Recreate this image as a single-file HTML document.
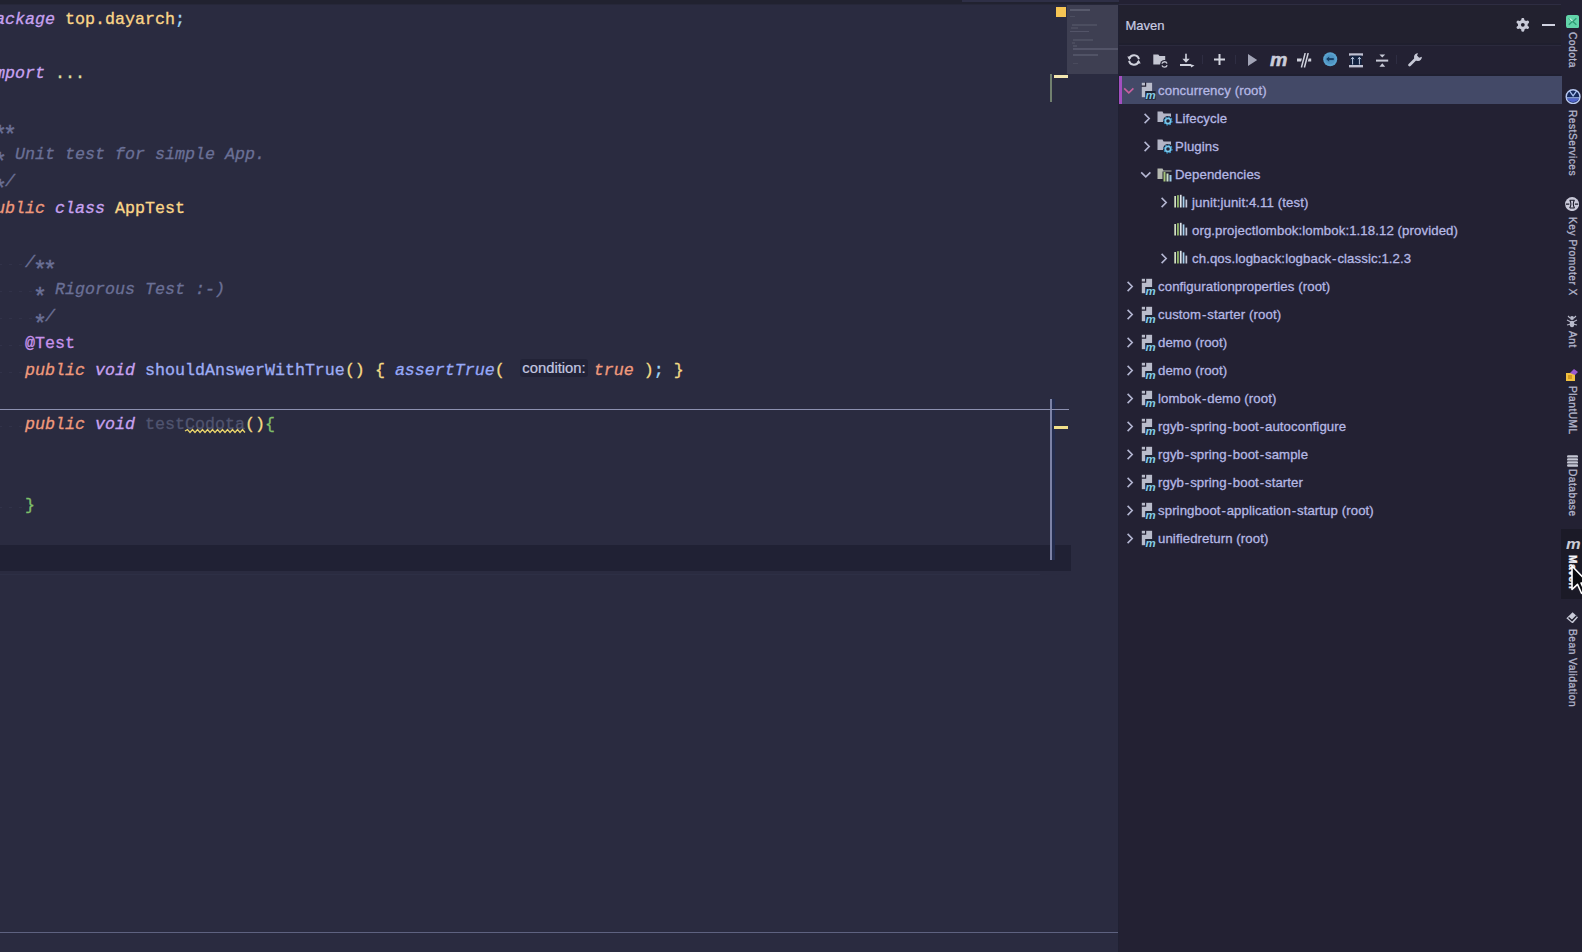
<!DOCTYPE html>
<html><head><meta charset="utf-8">
<style>
*{margin:0;padding:0;box-sizing:border-box}
html,body{width:1582px;height:952px;overflow:hidden;background:#2a2b40}
body{position:relative;font-family:"Liberation Sans",sans-serif}
.abs{position:absolute}
svg.abs{display:block}
#editor{left:0;top:0;width:1119px;height:952px;background:#2a2b40;overflow:hidden}
.ln{position:absolute;left:-15px;height:27px;line-height:27px;font-family:"Liberation Mono",monospace;font-size:16.66px;white-space:pre;color:#a6accd;-webkit-text-stroke:0.3px currentColor}
.kw{color:#c8a2f0;font-style:italic}
.pub{color:#f09a7c;font-style:italic}
.cls{color:#fad688}
.cm{color:#6a7096;font-style:italic}
.ast{display:inline-block;width:10.0002px;font-style:normal;transform:translateY(9px) scale(1.4)}
.fn{color:#9eadf4}
.fni{color:#96a8f8;font-style:italic}
.par{color:#f3da84}
.grn{color:#7fbf6a}
.semi{color:#a0d8f8}
.dim{color:#50546f}
.hint{display:inline-block;width:79px;height:27px;vertical-align:top;position:relative;-webkit-text-stroke:0}
.hint span{position:absolute;left:5px;top:1.8px;height:18.4px;line-height:17.7px;padding:1px 2.5px 0 2.5px;background:#222337;border-radius:3px;font-family:"Liberation Sans",sans-serif;font-size:14.8px;color:#c5c8e0;font-style:normal;-webkit-text-stroke:0.2px #c5c8e0;white-space:nowrap}
.typo{}
#panel{left:1119px;top:0;width:463px;height:952px;background:#232133}
.tr{position:absolute;height:28px;line-height:28px;font-size:13.2px;letter-spacing:0.1px;color:#b5b8e4;white-space:nowrap;-webkit-text-stroke:0.3px currentColor}
.hy{margin:0 0.8px}
.vt{position:absolute;left:1565px;font-size:10.2px;letter-spacing:0.5px;color:#b3b6cc;writing-mode:vertical-rl;white-space:nowrap;line-height:14px;width:14px;-webkit-text-stroke:0.3px currentColor}
</style></head><body>
<div id="editor" class="abs">
<div class="abs" style="left:0;top:545px;width:1071px;height:26px;background:#202134"></div><div class="abs" style="left:0;top:574px;width:1040px;height:1px;background:#2d2f45"></div>
<div class="abs" style="left:0;top:409px;width:1069px;height:1px;background:#8c90b0"></div>
<div class="ln" style="top:6px"><span class="kw">package</span> <span class="cls">top.dayarch</span><span class="semi">;</span></div>
<div class="ln" style="top:60px"><span class="kw">import</span> <span style="color:#e3e3a3">...</span></div>
<div class="ln" style="top:114px"><span class="cm">/<i class="ast">*</i><i class="ast">*</i></span></div>
<div class="ln" style="top:141px"><span class="cm"> <i class="ast">*</i> Unit test for simple App.</span></div>
<div class="ln" style="top:168px"><span class="cm"> <i class="ast">*</i>/</span></div>
<div class="ln" style="top:195px"><span class="pub">public</span> <span class="kw">class</span> <span class="cls">AppTest</span></div>
<div class="ln" style="top:249px">    <span class="cm">/<i class="ast">*</i><i class="ast">*</i></span></div>
<div class="ln" style="top:276px">    <span class="cm"> <i class="ast">*</i> Rigorous Test :-)</span></div>
<div class="ln" style="top:303px">    <span class="cm"> <i class="ast">*</i>/</span></div>
<div class="ln" style="top:330px">    <span style="color:#c792ea">@Test</span></div>
<div class="ln" style="top:357px">    <span class="pub">public</span> <span class="kw">void</span> <span class="fn">shouldAnswerWithTrue</span><span class="par">()</span> <span class="par">{</span> <span class="fni">assertTrue</span><span class="par">(</span> <span class="hint"><span>condition:</span></span><span class="pub">true</span> <span class="par">)</span><span class="semi">;</span> <span class="par">}</span></div>
<div class="ln" style="top:411px">    <span class="pub">public</span> <span class="kw">void</span> <span class="dim">test<span class="typo">Codota</span></span><span class="par">()</span><span class="grn">{</span></div>
<div class="ln" style="top:492px">    <span class="grn">}</span></div>
<svg class="abs" style="left:0;top:0" width="300" height="440" viewBox="0 0 300 440"><path d="M185 431 L187.5 429.5 L190.0 432.5 L192.5 429.5 L195.0 432.5 L197.5 429.5 L200.0 432.5 L202.5 429.5 L205.0 432.5 L207.5 429.5 L210.0 432.5 L212.5 429.5 L215.0 432.5 L217.5 429.5 L220.0 432.5 L222.5 429.5 L225.0 432.5 L227.5 429.5 L230.0 432.5 L232.5 429.5 L235.0 432.5 L237.5 429.5 L240.0 432.5 L242.5 429.5 L245.0 432.5" fill="none" stroke="#e8d46a" stroke-width="1.3"/></svg>
<div class="abs" style="left:-1.5px;top:264px;width:3px;height:1.2px;background:#313249"></div>
<div class="abs" style="left:8.5px;top:264px;width:3px;height:1.2px;background:#313249"></div>
<div class="abs" style="left:18.5px;top:264px;width:3px;height:1.2px;background:#313249"></div>
<div class="abs" style="left:-1.5px;top:291px;width:3px;height:1.2px;background:#313249"></div>
<div class="abs" style="left:8.5px;top:291px;width:3px;height:1.2px;background:#313249"></div>
<div class="abs" style="left:18.5px;top:291px;width:3px;height:1.2px;background:#313249"></div>
<div class="abs" style="left:28.5px;top:291px;width:3px;height:1.2px;background:#313249"></div>
<div class="abs" style="left:-1.5px;top:318px;width:3px;height:1.2px;background:#313249"></div>
<div class="abs" style="left:8.5px;top:318px;width:3px;height:1.2px;background:#313249"></div>
<div class="abs" style="left:18.5px;top:318px;width:3px;height:1.2px;background:#313249"></div>
<div class="abs" style="left:28.5px;top:318px;width:3px;height:1.2px;background:#313249"></div>
<div class="abs" style="left:-1.5px;top:345px;width:3px;height:1.2px;background:#313249"></div>
<div class="abs" style="left:8.5px;top:345px;width:3px;height:1.2px;background:#313249"></div>
<div class="abs" style="left:18.5px;top:345px;width:3px;height:1.2px;background:#313249"></div>
<div class="abs" style="left:-1.5px;top:372px;width:3px;height:1.2px;background:#313249"></div>
<div class="abs" style="left:8.5px;top:372px;width:3px;height:1.2px;background:#313249"></div>
<div class="abs" style="left:18.5px;top:372px;width:3px;height:1.2px;background:#313249"></div>
<div class="abs" style="left:-1.5px;top:426px;width:3px;height:1.2px;background:#313249"></div>
<div class="abs" style="left:8.5px;top:426px;width:3px;height:1.2px;background:#313249"></div>
<div class="abs" style="left:18.5px;top:426px;width:3px;height:1.2px;background:#313249"></div>
<div class="abs" style="left:-1.5px;top:507px;width:3px;height:1.2px;background:#313249"></div>
<div class="abs" style="left:8.5px;top:507px;width:3px;height:1.2px;background:#313249"></div>
<div class="abs" style="left:18.5px;top:507px;width:3px;height:1.2px;background:#313249"></div>
</div>
<div class="abs" style="left:0;top:0;width:1582px;height:4px;background:#212230"></div>
<div class="abs" style="left:0;top:4px;width:1582px;height:1px;background:#262739"></div>
<div class="abs" style="left:962px;top:0;width:290px;height:1.5px;background:#2e2f46"></div>
<div class="abs" style="left:1067px;top:5px;width:51px;height:69px;background:#3e3f52"></div>
<div class="abs" style="left:1056px;top:7px;width:10px;height:10px;background:#f6c554"></div>
<div class="abs" style="left:1054px;top:75px;width:14px;height:2.5px;background:#f3e6b0"></div>
<div class="abs" style="left:1050px;top:74px;width:2px;height:28px;background:#71806f"></div>
<div class="abs" style="left:1050px;top:399px;width:2px;height:161px;background:#7c82a6"></div>
<div class="abs" style="left:1052px;top:399px;width:3px;height:161px;background:#222b4c"></div>
<div class="abs" style="left:1048px;top:409px;width:21px;height:1px;background:#8c90b0"></div>
<div class="abs" style="left:1054px;top:426px;width:14px;height:2.5px;background:#f1e08a"></div>
<div class="abs" style="left:0;top:932px;width:1119px;height:1px;background:#5e6280"></div>
<div class="abs" style="left:1069.5px;top:9.3px;width:20.200000000000045px;height:1.5px;background:rgba(225,228,245,0.165)"></div>
<div class="abs" style="left:1069.5px;top:15.7px;width:5.5px;height:1.5px;background:rgba(225,228,245,0.09)"></div>
<div class="abs" style="left:1072px;top:24.4px;width:24.59999999999991px;height:1.5px;background:rgba(225,228,245,0.09)"></div>
<div class="abs" style="left:1071px;top:27.2px;width:7px;height:1.5px;background:rgba(225,228,245,0.075)"></div>
<div class="abs" style="left:1069.5px;top:30.5px;width:19.09999999999991px;height:1.5px;background:rgba(225,228,245,0.135)"></div>
<div class="abs" style="left:1072.5px;top:39.4px;width:20.5px;height:1.5px;background:rgba(225,228,245,0.09)"></div>
<div class="abs" style="left:1072px;top:42.3px;width:3px;height:1.5px;background:rgba(225,228,245,0.075)"></div>
<div class="abs" style="left:1072.5px;top:45.2px;width:4.5px;height:1.5px;background:rgba(225,228,245,0.09)"></div>
<div class="abs" style="left:1073px;top:48.1px;width:44.5px;height:1.5px;background:rgba(225,228,245,0.135)"></div>
<div class="abs" style="left:1073px;top:54.4px;width:25px;height:1.5px;background:rgba(225,228,245,0.12)"></div>
<div class="abs" style="left:1073px;top:62.5px;width:5px;height:1.5px;background:rgba(225,228,245,0.075)"></div>
<div id="panel" class="abs"></div>
<div class="abs" style="left:1118px;top:5px;width:1px;height:947px;background:#202133"></div>
<div class="abs" style="left:1119px;top:4px;width:442px;height:1px;background:#2e2d42"></div>
<div class="abs" style="left:1119px;top:5px;width:442px;height:38px;background:#22212f"></div>
<div class="abs" style="left:1119px;top:43px;width:442px;height:1.5px;background:#1f1f2e"></div>
<div class="abs" style="left:1119px;top:45px;width:442px;height:1px;background:#2b2a3d"></div>
<div class="abs" style="left:1119px;top:74px;width:442px;height:2px;background:#1f1f30"></div>
<div class="abs" style="left:1125.5px;top:16.6px;font-size:13px;line-height:18px;color:#c9cbe2;-webkit-text-stroke:0.2px #c9cbe2">Maven</div>
<svg class="abs" style="left:1516.2px;top:18.2px" width="13.6" height="13.6" viewBox="0 0 13.6 13.6"><g fill="#c8cad8"><circle cx="6.8" cy="6.8" r="4.9"/><g stroke="#c8cad8" stroke-width="3" stroke-linecap="round"><path d="M6.8 1.4v10.8" /><path d="M2.12 4.1l9.36 5.4"/><path d="M2.12 9.5l9.36-5.4"/></g></g><circle cx="6.8" cy="6.8" r="1.9" fill="#1c1b28"/></svg>
<div class="abs" style="left:1542px;top:24px;width:13px;height:2px;background:#d0d2e0"></div>

<svg class="abs" style="left:1127px;top:53px" width="14" height="14" viewBox="0 0 14 14"><g fill="none" stroke="#cfd1dc" stroke-width="2"><path d="M2.3 5.6A5 5 0 0 1 11.9 6.2"/><path d="M11.7 8.4A5 5 0 0 1 2.1 7.8"/></g><path d="M0.3 3.4L4.6 3.6L2.4 7.3z" fill="#cfd1dc"/><path d="M13.7 10.6L9.4 10.4L11.6 6.7z" fill="#cfd1dc"/></svg>
<svg class="abs" style="left:1152.5px;top:53.5px" width="16" height="15" viewBox="0 0 16 15"><path d="M0.3 0.5h5l1.2 1.4h5.7v8.6H0.3z" fill="#c4c6d2"/><circle cx="11.5" cy="10.4" r="4.4" fill="#232133"/><g fill="none" stroke="#c4c6d2" stroke-width="1.4"><path d="M8.9 9.6A2.7 2.7 0 0 1 14 9.4"/><path d="M14.1 11.2A2.7 2.7 0 0 1 9 11.4"/></g></svg>
<svg class="abs" style="left:1180px;top:53px" width="16" height="16" viewBox="0 0 16 16"><rect x="5.2" y="0.7" width="1.6" height="5.4" fill="#cfd1dc"/><path d="M2.4 5.8h7.3L6 9.7z" fill="#cfd1dc"/><rect x="0" y="11" width="11" height="2" fill="#cfd1dc"/><path d="M10 11L14.5 12.6L11.2 14.6z" fill="#cfd1dc"/></svg>
<div class="abs" style="left:1202px;top:55px;width:1px;height:9px;background:#2e2d42"></div>
<svg class="abs" style="left:1213.5px;top:54.3px" width="11" height="11" viewBox="0 0 11 11"><path d="M5.5 0v11M0 5.5h11" stroke="#d2d4de" stroke-width="2"/></svg>
<div class="abs" style="left:1235px;top:55px;width:1px;height:9px;background:#2e2d42"></div>
<svg class="abs" style="left:1248px;top:54px" width="10" height="12" viewBox="0 0 10 12"><path d="M0 0l9.2 6L0 12z" fill="#a2a4b6"/></svg>
<div class="abs" style="left:1269.5px;top:46.5px;font-size:17.5px;line-height:26px;font-weight:bold;font-style:italic;color:#cacbd9;letter-spacing:-0.3px;transform:scaleX(1.12);transform-origin:left;-webkit-text-stroke:0.5px #cacbd9">m</div>
<svg class="abs" style="left:1297px;top:53px" width="15" height="15" viewBox="0 0 15 15"><path d="M0 7h14.2" stroke="#cfd1dc" stroke-width="3"/><g stroke="#232133" stroke-width="3.6"><path d="M8.2 0L4.4 14.5M11.2 0L7.4 14.5" /></g><g stroke="#cfd1dc" stroke-width="1.5"><path d="M8.2 0L4.4 14.5M11.2 0L7.4 14.5"/></g></svg>
<svg class="abs" style="left:1322.8px;top:52.4px" width="15" height="15" viewBox="0 0 15 15"><circle cx="7.2" cy="7.2" r="7" fill="#5aa3cf"/><circle cx="7.2" cy="7.2" r="5" fill="#4f95c4"/><path d="M4.2 7.1h6.6" stroke="#173f66" stroke-width="2"/><path d="M3.2 7.1l3-2.6v5.2z" fill="#173f66"/></svg>
<svg class="abs" style="left:1349px;top:52.5px" width="15" height="15" viewBox="0 0 15 15"><rect x="0" y="0.3" width="14" height="2.4" fill="#bfc1d2"/><rect x="0" y="12" width="14" height="2.4" fill="#bfc1d2"/><rect x="1.5" y="2.7" width="11" height="9.3" fill="#10203e"/><path d="M3.6 11.5V4.3M10.4 11.5V4.3M2.1 6.2l1.5-1.9 1.5 1.9M8.9 6.2l1.5-1.9 1.5 1.9" stroke="#b9c4dc" stroke-width="1" fill="none"/></svg>
<svg class="abs" style="left:1375.8px;top:53.5px" width="13" height="13" viewBox="0 0 13 13"><rect x="0" y="5.6" width="12.2" height="2" fill="#c7c9d6"/><path d="M3.4 0.5h5.8L6.3 3.4zM3.4 12.7h5.8L6.3 9.3z" fill="#c7c9d6"/></svg>
<div class="abs" style="left:1396px;top:55px;width:1px;height:9px;background:#2e2d42"></div>
<svg class="abs" style="left:1408px;top:53px" width="14" height="14" viewBox="0 0 14 14"><path d="M1.6 12l6-6" stroke="#c6c8d6" stroke-width="2.8" stroke-linecap="round"/><path d="M10 0.2a3.9 3.9 0 1 0 3.8 3.6l-2.6 1-2.2-2.2z" fill="#c6c8d6"/></svg>

<div class="abs" style="left:1119px;top:76px;width:443px;height:28px;background:#434967"></div><div class="abs" style="left:1119px;top:76px;width:2.5px;height:28px;background:#a24fc0"></div>
<div class="abs" style="left:1123px;top:87px;width:12px;height:8px;line-height:0"><svg width="12" height="8" viewBox="0 0 12 8"><path d="M1.2 1.4L5.8 5.8L10.4 1.4" fill="none" stroke="#c8609f" stroke-width="1.6"/></svg></div>
<div class="abs" style="left:1141px;top:82px;width:17px;height:18px;line-height:0"><svg width="17" height="18" viewBox="0 0 17 18"><rect x="0.8" y="0.8" width="10.3" height="14.4" fill="#b9bccb"/><path d="M0.3 4.1H4.6V0.3" fill="none" stroke="#232133" stroke-width="1.2"/><rect x="4.2" y="9" width="10.4" height="8.6" fill="#1d2233"/><text x="4.6" y="16.6" font-family="Liberation Sans" font-style="italic" font-weight="bold" font-size="11.5" fill="#86cde6" letter-spacing="-0.4">m</text></svg></div>
<div class="tr" style="left:1158px;top:76.8px">concurrency (root)</div>
<div class="abs" style="left:1142.5px;top:112.5px;width:8px;height:11px;line-height:0"><svg width="8" height="11" viewBox="0 0 8 11"><path d="M1.6 0.9L6.2 5.5L1.6 10.1" fill="none" stroke="#b4b6d2" stroke-width="1.6"/></svg></div>
<div class="abs" style="left:1157px;top:111px;width:17px;height:18px;line-height:0"><svg width="16" height="16" viewBox="0 0 16 16"><path d="M0.5 0.5h5l1 2h7.5v8.5H0.5z" fill="#b3b5c6"/><circle cx="11" cy="10" r="5" fill="#232133"/><circle cx="11" cy="10" r="2.7" fill="none" stroke="#7cc8ea" stroke-width="1.8"/><circle cx="11" cy="10" r="3.9" fill="none" stroke="#3a96c8" stroke-width="1.4" stroke-dasharray="1.6 1.4"/></svg></div>
<div class="tr" style="left:1175px;top:104.8px">Lifecycle</div>
<div class="abs" style="left:1142.5px;top:140.5px;width:8px;height:11px;line-height:0"><svg width="8" height="11" viewBox="0 0 8 11"><path d="M1.6 0.9L6.2 5.5L1.6 10.1" fill="none" stroke="#b4b6d2" stroke-width="1.6"/></svg></div>
<div class="abs" style="left:1157px;top:139px;width:17px;height:18px;line-height:0"><svg width="16" height="16" viewBox="0 0 16 16"><path d="M0.5 0.5h5l1 2h7.5v8.5H0.5z" fill="#b3b5c6"/><circle cx="11" cy="10" r="5" fill="#232133"/><circle cx="11" cy="10" r="2.7" fill="none" stroke="#7cc8ea" stroke-width="1.8"/><circle cx="11" cy="10" r="3.9" fill="none" stroke="#3a96c8" stroke-width="1.4" stroke-dasharray="1.6 1.4"/></svg></div>
<div class="tr" style="left:1175px;top:132.8px">Plugins</div>
<div class="abs" style="left:1140px;top:171px;width:12px;height:8px;line-height:0"><svg width="12" height="8" viewBox="0 0 12 8"><path d="M1.2 1.4L5.8 5.8L10.4 1.4" fill="none" stroke="#b4b6d2" stroke-width="1.6"/></svg></div>
<div class="abs" style="left:1157px;top:167.5px;width:17px;height:18px;line-height:0"><svg width="16" height="16" viewBox="0 0 16 16"><path d="M0.5 0.5h5l1 2h8v8.5H0.5z" fill="#b5b9b0"/><path d="M5.5 3.5h10v12.5h-10z" fill="#232133"/><rect x="6.5" y="4" width="2" height="9.5" fill="#a6c47a"/><rect x="9.5" y="5.5" width="2" height="8" fill="#c8e0c8"/><rect x="12.5" y="7" width="2" height="6.5" fill="#9ccbe8"/></svg></div>
<div class="tr" style="left:1175px;top:160.8px">Dependencies</div>
<div class="abs" style="left:1159.5px;top:196.5px;width:8px;height:11px;line-height:0"><svg width="8" height="11" viewBox="0 0 8 11"><path d="M1.6 0.9L6.2 5.5L1.6 10.1" fill="none" stroke="#b4b6d2" stroke-width="1.6"/></svg></div>
<div class="abs" style="left:1174px;top:193px;width:17px;height:18px;line-height:0"><svg width="16" height="16" viewBox="0 0 16 16"><rect x="0.3" y="3" width="1.7" height="11.5" fill="#d2e0c4"/><rect x="3.1" y="2.2" width="1.7" height="12.3" fill="#9cc46e"/><rect x="5.9" y="1.8" width="1.7" height="12.7" fill="#dfe3ea"/><rect x="8.7" y="3.4" width="1.7" height="11.1" fill="#a6d2ee"/><rect x="11.5" y="6.6" width="1.7" height="7.9" fill="#c4c7d8"/></svg></div>
<div class="tr" style="left:1192px;top:188.8px">junit:junit:4.11 (test)</div>
<div class="abs" style="left:1174px;top:221px;width:17px;height:18px;line-height:0"><svg width="16" height="16" viewBox="0 0 16 16"><rect x="0.3" y="3" width="1.7" height="11.5" fill="#d2e0c4"/><rect x="3.1" y="2.2" width="1.7" height="12.3" fill="#9cc46e"/><rect x="5.9" y="1.8" width="1.7" height="12.7" fill="#dfe3ea"/><rect x="8.7" y="3.4" width="1.7" height="11.1" fill="#a6d2ee"/><rect x="11.5" y="6.6" width="1.7" height="7.9" fill="#c4c7d8"/></svg></div>
<div class="tr" style="left:1192px;top:216.8px">org.projectlombok:lombok:1.18.12 (provided)</div>
<div class="abs" style="left:1159.5px;top:252.5px;width:8px;height:11px;line-height:0"><svg width="8" height="11" viewBox="0 0 8 11"><path d="M1.6 0.9L6.2 5.5L1.6 10.1" fill="none" stroke="#b4b6d2" stroke-width="1.6"/></svg></div>
<div class="abs" style="left:1174px;top:249px;width:17px;height:18px;line-height:0"><svg width="16" height="16" viewBox="0 0 16 16"><rect x="0.3" y="3" width="1.7" height="11.5" fill="#d2e0c4"/><rect x="3.1" y="2.2" width="1.7" height="12.3" fill="#9cc46e"/><rect x="5.9" y="1.8" width="1.7" height="12.7" fill="#dfe3ea"/><rect x="8.7" y="3.4" width="1.7" height="11.1" fill="#a6d2ee"/><rect x="11.5" y="6.6" width="1.7" height="7.9" fill="#c4c7d8"/></svg></div>
<div class="tr" style="left:1192px;top:244.8px">ch.qos.logback:logback<span class="hy">-</span>classic:1.2.3</div>
<div class="abs" style="left:1125.5px;top:280.5px;width:8px;height:11px;line-height:0"><svg width="8" height="11" viewBox="0 0 8 11"><path d="M1.6 0.9L6.2 5.5L1.6 10.1" fill="none" stroke="#b4b6d2" stroke-width="1.6"/></svg></div>
<div class="abs" style="left:1141px;top:278px;width:17px;height:18px;line-height:0"><svg width="17" height="18" viewBox="0 0 17 18"><rect x="0.8" y="0.8" width="10.3" height="14.4" fill="#b9bccb"/><path d="M0.3 4.1H4.6V0.3" fill="none" stroke="#232133" stroke-width="1.2"/><rect x="4.2" y="9" width="10.4" height="8.6" fill="#1d2233"/><text x="4.6" y="16.6" font-family="Liberation Sans" font-style="italic" font-weight="bold" font-size="11.5" fill="#86cde6" letter-spacing="-0.4">m</text></svg></div>
<div class="tr" style="left:1158px;top:272.8px">configurationproperties (root)</div>
<div class="abs" style="left:1125.5px;top:308.5px;width:8px;height:11px;line-height:0"><svg width="8" height="11" viewBox="0 0 8 11"><path d="M1.6 0.9L6.2 5.5L1.6 10.1" fill="none" stroke="#b4b6d2" stroke-width="1.6"/></svg></div>
<div class="abs" style="left:1141px;top:306px;width:17px;height:18px;line-height:0"><svg width="17" height="18" viewBox="0 0 17 18"><rect x="0.8" y="0.8" width="10.3" height="14.4" fill="#b9bccb"/><path d="M0.3 4.1H4.6V0.3" fill="none" stroke="#232133" stroke-width="1.2"/><rect x="4.2" y="9" width="10.4" height="8.6" fill="#1d2233"/><text x="4.6" y="16.6" font-family="Liberation Sans" font-style="italic" font-weight="bold" font-size="11.5" fill="#86cde6" letter-spacing="-0.4">m</text></svg></div>
<div class="tr" style="left:1158px;top:300.8px">custom<span class="hy">-</span>starter (root)</div>
<div class="abs" style="left:1125.5px;top:336.5px;width:8px;height:11px;line-height:0"><svg width="8" height="11" viewBox="0 0 8 11"><path d="M1.6 0.9L6.2 5.5L1.6 10.1" fill="none" stroke="#b4b6d2" stroke-width="1.6"/></svg></div>
<div class="abs" style="left:1141px;top:334px;width:17px;height:18px;line-height:0"><svg width="17" height="18" viewBox="0 0 17 18"><rect x="0.8" y="0.8" width="10.3" height="14.4" fill="#b9bccb"/><path d="M0.3 4.1H4.6V0.3" fill="none" stroke="#232133" stroke-width="1.2"/><rect x="4.2" y="9" width="10.4" height="8.6" fill="#1d2233"/><text x="4.6" y="16.6" font-family="Liberation Sans" font-style="italic" font-weight="bold" font-size="11.5" fill="#86cde6" letter-spacing="-0.4">m</text></svg></div>
<div class="tr" style="left:1158px;top:328.8px">demo (root)</div>
<div class="abs" style="left:1125.5px;top:364.5px;width:8px;height:11px;line-height:0"><svg width="8" height="11" viewBox="0 0 8 11"><path d="M1.6 0.9L6.2 5.5L1.6 10.1" fill="none" stroke="#b4b6d2" stroke-width="1.6"/></svg></div>
<div class="abs" style="left:1141px;top:362px;width:17px;height:18px;line-height:0"><svg width="17" height="18" viewBox="0 0 17 18"><rect x="0.8" y="0.8" width="10.3" height="14.4" fill="#b9bccb"/><path d="M0.3 4.1H4.6V0.3" fill="none" stroke="#232133" stroke-width="1.2"/><rect x="4.2" y="9" width="10.4" height="8.6" fill="#1d2233"/><text x="4.6" y="16.6" font-family="Liberation Sans" font-style="italic" font-weight="bold" font-size="11.5" fill="#86cde6" letter-spacing="-0.4">m</text></svg></div>
<div class="tr" style="left:1158px;top:356.8px">demo (root)</div>
<div class="abs" style="left:1125.5px;top:392.5px;width:8px;height:11px;line-height:0"><svg width="8" height="11" viewBox="0 0 8 11"><path d="M1.6 0.9L6.2 5.5L1.6 10.1" fill="none" stroke="#b4b6d2" stroke-width="1.6"/></svg></div>
<div class="abs" style="left:1141px;top:390px;width:17px;height:18px;line-height:0"><svg width="17" height="18" viewBox="0 0 17 18"><rect x="0.8" y="0.8" width="10.3" height="14.4" fill="#b9bccb"/><path d="M0.3 4.1H4.6V0.3" fill="none" stroke="#232133" stroke-width="1.2"/><rect x="4.2" y="9" width="10.4" height="8.6" fill="#1d2233"/><text x="4.6" y="16.6" font-family="Liberation Sans" font-style="italic" font-weight="bold" font-size="11.5" fill="#86cde6" letter-spacing="-0.4">m</text></svg></div>
<div class="tr" style="left:1158px;top:384.8px">lombok<span class="hy">-</span>demo (root)</div>
<div class="abs" style="left:1125.5px;top:420.5px;width:8px;height:11px;line-height:0"><svg width="8" height="11" viewBox="0 0 8 11"><path d="M1.6 0.9L6.2 5.5L1.6 10.1" fill="none" stroke="#b4b6d2" stroke-width="1.6"/></svg></div>
<div class="abs" style="left:1141px;top:418px;width:17px;height:18px;line-height:0"><svg width="17" height="18" viewBox="0 0 17 18"><rect x="0.8" y="0.8" width="10.3" height="14.4" fill="#b9bccb"/><path d="M0.3 4.1H4.6V0.3" fill="none" stroke="#232133" stroke-width="1.2"/><rect x="4.2" y="9" width="10.4" height="8.6" fill="#1d2233"/><text x="4.6" y="16.6" font-family="Liberation Sans" font-style="italic" font-weight="bold" font-size="11.5" fill="#86cde6" letter-spacing="-0.4">m</text></svg></div>
<div class="tr" style="left:1158px;top:412.8px">rgyb<span class="hy">-</span>spring<span class="hy">-</span>boot<span class="hy">-</span>autoconfigure</div>
<div class="abs" style="left:1125.5px;top:448.5px;width:8px;height:11px;line-height:0"><svg width="8" height="11" viewBox="0 0 8 11"><path d="M1.6 0.9L6.2 5.5L1.6 10.1" fill="none" stroke="#b4b6d2" stroke-width="1.6"/></svg></div>
<div class="abs" style="left:1141px;top:446px;width:17px;height:18px;line-height:0"><svg width="17" height="18" viewBox="0 0 17 18"><rect x="0.8" y="0.8" width="10.3" height="14.4" fill="#b9bccb"/><path d="M0.3 4.1H4.6V0.3" fill="none" stroke="#232133" stroke-width="1.2"/><rect x="4.2" y="9" width="10.4" height="8.6" fill="#1d2233"/><text x="4.6" y="16.6" font-family="Liberation Sans" font-style="italic" font-weight="bold" font-size="11.5" fill="#86cde6" letter-spacing="-0.4">m</text></svg></div>
<div class="tr" style="left:1158px;top:440.8px">rgyb<span class="hy">-</span>spring<span class="hy">-</span>boot<span class="hy">-</span>sample</div>
<div class="abs" style="left:1125.5px;top:476.5px;width:8px;height:11px;line-height:0"><svg width="8" height="11" viewBox="0 0 8 11"><path d="M1.6 0.9L6.2 5.5L1.6 10.1" fill="none" stroke="#b4b6d2" stroke-width="1.6"/></svg></div>
<div class="abs" style="left:1141px;top:474px;width:17px;height:18px;line-height:0"><svg width="17" height="18" viewBox="0 0 17 18"><rect x="0.8" y="0.8" width="10.3" height="14.4" fill="#b9bccb"/><path d="M0.3 4.1H4.6V0.3" fill="none" stroke="#232133" stroke-width="1.2"/><rect x="4.2" y="9" width="10.4" height="8.6" fill="#1d2233"/><text x="4.6" y="16.6" font-family="Liberation Sans" font-style="italic" font-weight="bold" font-size="11.5" fill="#86cde6" letter-spacing="-0.4">m</text></svg></div>
<div class="tr" style="left:1158px;top:468.8px">rgyb<span class="hy">-</span>spring<span class="hy">-</span>boot<span class="hy">-</span>starter</div>
<div class="abs" style="left:1125.5px;top:504.5px;width:8px;height:11px;line-height:0"><svg width="8" height="11" viewBox="0 0 8 11"><path d="M1.6 0.9L6.2 5.5L1.6 10.1" fill="none" stroke="#b4b6d2" stroke-width="1.6"/></svg></div>
<div class="abs" style="left:1141px;top:502px;width:17px;height:18px;line-height:0"><svg width="17" height="18" viewBox="0 0 17 18"><rect x="0.8" y="0.8" width="10.3" height="14.4" fill="#b9bccb"/><path d="M0.3 4.1H4.6V0.3" fill="none" stroke="#232133" stroke-width="1.2"/><rect x="4.2" y="9" width="10.4" height="8.6" fill="#1d2233"/><text x="4.6" y="16.6" font-family="Liberation Sans" font-style="italic" font-weight="bold" font-size="11.5" fill="#86cde6" letter-spacing="-0.4">m</text></svg></div>
<div class="tr" style="left:1158px;top:496.8px">springboot<span class="hy">-</span>application<span class="hy">-</span>startup (root)</div>
<div class="abs" style="left:1125.5px;top:532.5px;width:8px;height:11px;line-height:0"><svg width="8" height="11" viewBox="0 0 8 11"><path d="M1.6 0.9L6.2 5.5L1.6 10.1" fill="none" stroke="#b4b6d2" stroke-width="1.6"/></svg></div>
<div class="abs" style="left:1141px;top:530px;width:17px;height:18px;line-height:0"><svg width="17" height="18" viewBox="0 0 17 18"><rect x="0.8" y="0.8" width="10.3" height="14.4" fill="#b9bccb"/><path d="M0.3 4.1H4.6V0.3" fill="none" stroke="#232133" stroke-width="1.2"/><rect x="4.2" y="9" width="10.4" height="8.6" fill="#1d2233"/><text x="4.6" y="16.6" font-family="Liberation Sans" font-style="italic" font-weight="bold" font-size="11.5" fill="#86cde6" letter-spacing="-0.4">m</text></svg></div>
<div class="tr" style="left:1158px;top:524.8px">unifiedreturn (root)</div>

<div class="abs" style="left:1561px;top:529px;width:21px;height:70px;background:#1b1a27"></div>
<svg class="abs" style="left:1565.8px;top:14.8px" width="13.2" height="13.4" viewBox="0 0 13.2 13.4"><rect x="0" y="0" width="13.2" height="13.4" rx="2.6" fill="#62d4aa"/><path d="M2.8 3.2l3.6 3.2-3.6 3.4M10.4 3.2l-3.6 3.2 3.6 3.4" stroke="#2f9a74" stroke-width="1.3" fill="none"/><path d="M3.6 3.4l2.8 2.6" stroke="#c8f8e4" stroke-width="1.2"/></svg>
<div class="vt" style="top:32px">Codota</div>
<svg class="abs" style="left:1564.6px;top:88.6px" width="16.2" height="15.3" viewBox="0 0 16.2 15.3"><circle cx="8.1" cy="7.65" r="6.9" fill="#14285a" stroke="#b8c8f0" stroke-width="1.4"/><path d="M4.5 1.8l3.6 5 3.6-5M1.5 8.8h13" stroke="#a8c0f0" stroke-width="1.3" fill="none"/><path d="M2 9.5a6.9 6.9 0 0 0 12 0z" fill="#5a6ee0" opacity="0.85"/></svg>
<div class="vt" style="top:109.5px">RestServices</div>
<svg class="abs" style="left:1565px;top:196.7px" width="14.2" height="14.2" viewBox="0 0 14.2 14.2"><circle cx="7.1" cy="7.1" r="7" fill="#c9c9d9"/><path d="M1 7.1h3.3M9.9 7.1h3.3" stroke="#1a1a28" stroke-width="1.3"/><path d="M4.6 3.2c1.2 1.2 1.3 2.6 1.3 3.9s-.1 2.7-1.3 3.9M9.6 3.2c-1.2 1.2-1.3 2.6-1.3 3.9s.1 2.7 1.3 3.9M4.6 3.2h5M4.6 11h5" stroke="#1a1a28" stroke-width="1.1" fill="none"/></svg>
<div class="vt" style="top:217px">Key Promoter X</div>
<svg class="abs" style="left:1566px;top:315px" width="12" height="13" viewBox="0 0 12 13"><ellipse cx="6" cy="3" rx="2" ry="2" fill="#b8bacb"/><ellipse cx="6" cy="9" rx="2.3" ry="3.2" fill="#b8bacb"/><path d="M1 5l4 2M11 5l-4 2M1 10l4-1M11 10l-4-1M2 1l2 2M10 1l-2 2" stroke="#b8bacb" stroke-width="1.1"/></svg>
<div class="vt" style="top:331px">Ant</div>
<svg class="abs" style="left:1565px;top:368px" width="14" height="14" viewBox="0 0 14 14"><rect x="1" y="5" width="9" height="8" fill="#f0c040"/><path d="M5 5l4-4 4 3-3 3" fill="#9a5ad0"/><rect x="3" y="7" width="4" height="4" fill="#d49a20"/></svg>
<div class="vt" style="top:386px">PlantUML</div>
<svg class="abs" style="left:1566.8px;top:455.3px" width="11.2" height="12" viewBox="0 0 11.2 12"><g fill="#c4c6d4"><rect x="0" y="0.2" width="11.2" height="2.4" rx="1.2"/><rect x="0" y="3.2" width="11.2" height="2.4" rx="1.2"/><rect x="0" y="6.2" width="11.2" height="2.4" rx="1.2"/><rect x="0" y="9.2" width="11.2" height="2.6" rx="1.3"/></g></svg>
<div class="vt" style="top:469px">Database</div>
<div class="abs" style="left:1565.5px;top:533.5px;font-size:15px;line-height:20px;font-weight:bold;font-style:italic;color:#c9cbd6;transform:scaleX(1.1);transform-origin:left">m</div>
<div class="vt" style="top:555px;color:#f4f4fa;font-weight:bold">Maven</div>
<svg class="abs" style="left:1566.4px;top:611.6px" width="12.4" height="11.8" viewBox="0 0 12.4 11.8"><path d="M6.6 0.3L12 5.2 6.6 11.5 0.4 6.2z" fill="#c8cad8"/><path d="M2.6 5.6l3.4 3 4.4-4.6" stroke="#1d1c2b" stroke-width="1.4" fill="none"/></svg>
<div class="vt" style="top:629px">Bean Validation</div>
<svg class="abs" style="left:1570.5px;top:565px" width="18" height="32" viewBox="0 0 18 32"><path d="M1 1v23.5l5.5-5.2 4 9 3.6-1.6-4-8.6h7.4z" fill="#0c0c10" stroke="#fff" stroke-width="1.6" stroke-linejoin="round"/></svg>

</body></html>
